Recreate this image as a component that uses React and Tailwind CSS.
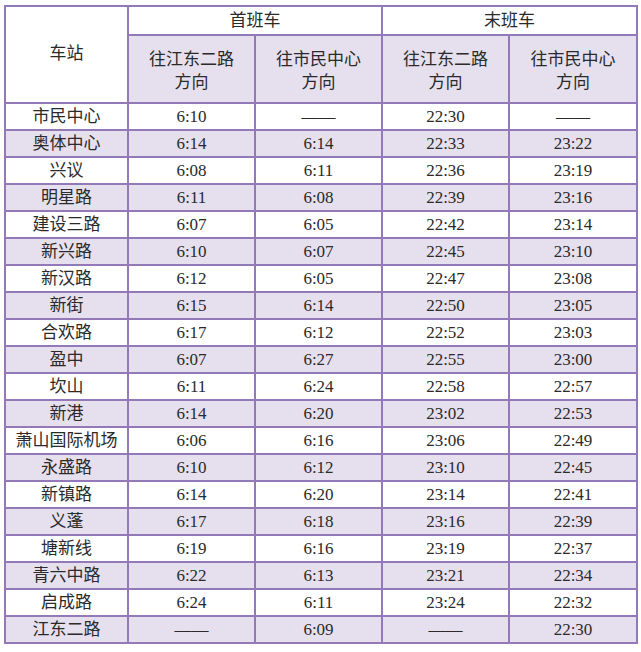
import React from "react";

const rows = [
  ["市民中心", "6:10", "——", "22:30", "——"],
  ["奥体中心", "6:14", "6:14", "22:33", "23:22"],
  ["兴议", "6:08", "6:11", "22:36", "23:19"],
  ["明星路", "6:11", "6:08", "22:39", "23:16"],
  ["建设三路", "6:07", "6:05", "22:42", "23:14"],
  ["新兴路", "6:10", "6:07", "22:45", "23:10"],
  ["新汉路", "6:12", "6:05", "22:47", "23:08"],
  ["新街", "6:15", "6:14", "22:50", "23:05"],
  ["合欢路", "6:17", "6:12", "22:52", "23:03"],
  ["盈中", "6:07", "6:27", "22:55", "23:00"],
  ["坎山", "6:11", "6:24", "22:58", "22:57"],
  ["新港", "6:14", "6:20", "23:02", "22:53"],
  ["萧山国际机场", "6:06", "6:16", "23:06", "22:49"],
  ["永盛路", "6:10", "6:12", "23:10", "22:45"],
  ["新镇路", "6:14", "6:20", "23:14", "22:41"],
  ["义蓬", "6:17", "6:18", "23:16", "22:39"],
  ["塘新线", "6:19", "6:16", "23:19", "22:37"],
  ["青六中路", "6:22", "6:13", "23:21", "22:34"],
  ["启成路", "6:24", "6:11", "23:24", "22:32"],
  ["江东二路", "——", "6:09", "——", "22:30"],
];

export default function App() {
  return (
    <div className="w-[641px] h-[652px] bg-white pt-[5px] pl-[4px]">
      <table
        className="table-fixed border-collapse w-[632px] text-[#2a2a2a] text-[17px] leading-none"
        style={{ fontFamily: '"Liberation Serif", "Noto Sans CJK SC", serif' }}
      >
        <colgroup>
          <col className="w-[123px]" />
          <col className="w-[127px]" />
          <col className="w-[127px]" />
          <col className="w-[127px]" />
          <col className="w-[128px]" />
        </colgroup>
        <thead>
          <tr className="h-[29px]">
            <th rowSpan={2} className="border-2 border-[#9479b8] font-normal text-center align-middle bg-white pb-[2px]">
              车站
            </th>
            <th colSpan={2} className="border-2 border-[#9479b8] font-normal text-center bg-white">
              首班车
            </th>
            <th colSpan={2} className="border-2 border-[#9479b8] font-normal text-center bg-white">
              末班车
            </th>
          </tr>
          <tr className="h-[68px] bg-[#e6e0ee]">
            {[0, 1, 2, 3].map((i) => (
              <th key={i} className="border-2 border-[#9479b8] font-normal text-center leading-[23px] pt-[4px]">
                <div>{i % 2 === 0 ? "往江东二路" : "往市民中心"}</div>
                <div>方向</div>
              </th>
            ))}
          </tr>
        </thead>
        <tbody>
          {rows.map((r, idx) => (
            <tr key={idx} className={idx % 2 === 1 ? "h-[27px] bg-[#e6e0ee]" : "h-[27px] bg-white"}>
              {r.map((c, j) => (
                <td key={j} className="border-2 border-[#9479b8] text-center align-middle p-0">
                  {c}
                </td>
              ))}
            </tr>
          ))}
        </tbody>
      </table>
    </div>
  );
}
